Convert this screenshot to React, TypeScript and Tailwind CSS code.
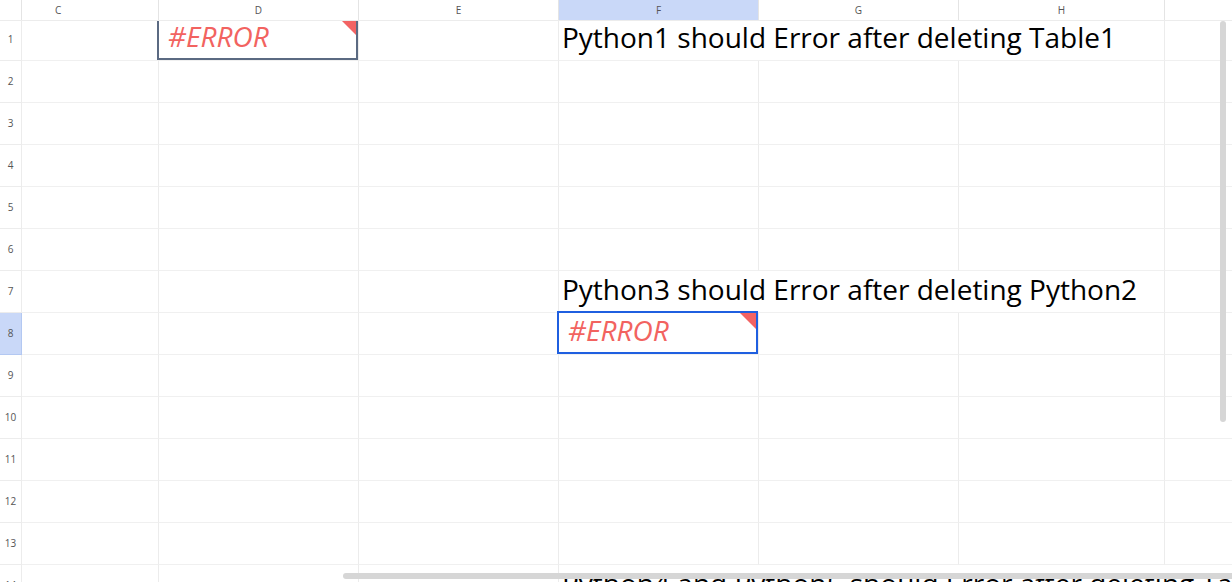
import React from "react";

const cols = [
  { key: "C", w: 137 },
  { key: "D", w: 200 },
  { key: "E", w: 200 },
  { key: "F", w: 200 },
  { key: "G", w: 200 },
  { key: "H", w: 206 },
  { key: "I", w: 200 },
];

type Cell = { text?: string; error?: "slate" | "blue"; noRight?: boolean };

const rowData: Record<number, Record<string, Cell>> = {
  1: {
    D: { error: "slate" },
    F: { text: "Python1 should Error after deleting Table1", noRight: true },
    G: { noRight: true },
  },
  7: {
    F: { text: "Python3 should Error after deleting Python2", noRight: true },
    G: { noRight: true },
  },
  8: { F: { error: "blue" } },
  14: {
    F: { text: "Python4 and Python5 should Error after deleting Table1", noRight: true },
    G: { noRight: true },
    H: { noRight: true },
  },
};

function ErrorCell({ tone }: { tone: "slate" | "blue" }) {
  return (
    <div
      className={
        "absolute -left-[2px] -top-[2px] right-0 bottom-0 border-2 " +
        (tone === "slate" ? "border-[#5b6a82]" : "border-[#1f5fe0]")
      }
    >
      <div className="absolute right-0 top-0 w-0 h-0 border-t-[16px] border-l-[16px] border-t-[#f26363] border-l-transparent" />
      <div className="pl-[9px] pb-[5px] h-full flex items-center text-[28px] italic text-[#f26360] leading-none">
        #ERROR
      </div>
    </div>
  );
}

export default function App() {
  const rows = Array.from({ length: 14 }, (_, i) => i + 1);
  return (
    <div
      className="relative w-[1232px] h-[582px] overflow-hidden bg-white"
      style={{ fontFamily: '"Open Sans", "Noto Sans", sans-serif' }}
    >
      {/* Column header */}
      <div className="flex h-[21px] border-b border-[#ececec] bg-white relative z-10">
        <div className="w-[22px] shrink-0 border-r border-[#e4e4e4]" />
        {cols.map((c) => (
          <div
            key={c.key}
            style={{ width: c.w }}
            className={
              "shrink-0 border-r border-[#e4e4e4] flex items-center text-[10px] text-[#555] " +
              (c.key === "C" ? "justify-start pl-[33px] " : "justify-center ") +
              (c.key === "F" ? "bg-[#c9d8f8]" : "")
            }
          >
            {c.key}
          </div>
        ))}
      </div>

      {/* Body */}
      <div className="h-[561px] overflow-hidden">
        <div className="-mt-[2px]">
          {rows.map((r) => (
            <div key={r} className="flex h-[42px]">
              <div
                className={
                  "w-[22px] shrink-0 border-r border-b flex items-center justify-center text-[10px] text-[#555] " +
                  (r === 8 ? "bg-[#c9d8f8] border-[#b3c8f2]" : "border-[#ececec]")
                }
              >
                {r}
              </div>
              {cols.map((c) => {
                const cell = rowData[r]?.[c.key];
                return (
                  <div
                    key={c.key}
                    style={{ width: c.w }}
                    className={
                      "relative shrink-0 border-b border-[#f0f0f0] " +
                      (cell?.noRight ? "" : "border-r border-r-[#ececec]")
                    }
                  >
                    {cell?.text && (
                      <div className="absolute left-[3px] top-0 pb-[6px] h-full flex items-center whitespace-nowrap text-[28px] text-black leading-none z-[1]">
                        {cell.text}
                      </div>
                    )}
                    {cell?.error && <ErrorCell tone={cell.error} />}
                  </div>
                );
              })}
            </div>
          ))}
        </div>
      </div>

      {/* Scrollbars */}
      <div className="absolute left-[1220px] top-[21px] w-[6px] h-[401px] rounded-full bg-[#d6d6d6] z-20" />
      <div className="absolute left-[343px] top-[573px] w-[900px] h-[6px] rounded-full bg-[#d6d6d6] z-20" />
    </div>
  );
}
